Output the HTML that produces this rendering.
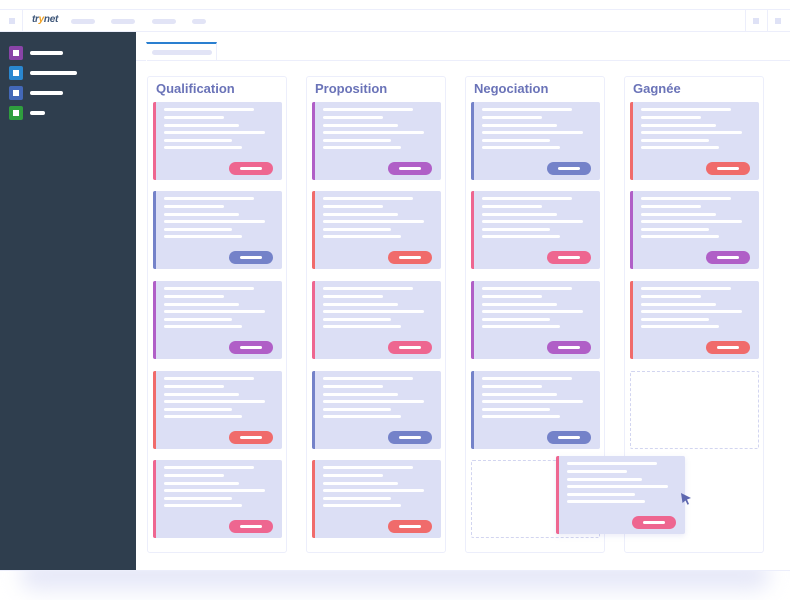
<!DOCTYPE html>
<html><head><meta charset="utf-8"><style>
*{margin:0;padding:0;box-sizing:border-box}
body{width:790px;height:600px;background:#fff;position:relative;overflow:hidden;font-family:"Liberation Sans",sans-serif}
.shadow{position:absolute;left:20px;top:560px;width:750px;height:30px;background:#e6e8f8;filter:blur(10px);border-radius:20px}
.win{position:absolute;left:0;top:10px;width:790px;height:560px;background:#fff;outline:1px solid #eceefb}
.top{position:absolute;left:0;top:0;width:790px;height:22px;border-bottom:1px solid #eceefb}
.side{position:absolute;left:0;top:22px;width:136px;height:538px;background:#2f3e4e}
.a{position:absolute}
.pill{position:absolute;background:#e2e4f6;border-radius:3px;height:5px}
.col{position:absolute;top:66px;width:140px;height:477px;border:1px solid #eceefb;border-radius:3px;background:#fff}
.col h3{position:absolute;left:8px;top:4px;font-size:13px;color:#6a73b8;font-weight:700}
.card{position:absolute;width:129px;height:78px;background:#dcdff5;border-radius:2px;border-left:3px solid}
.ln{position:absolute;left:8px;height:3px;background:#fff;border-radius:2px}
.btn{position:absolute;left:73px;top:60px;width:44px;height:13px;border-radius:7px}
.btn:after{content:"";position:absolute;left:11px;top:5px;width:22px;height:3px;background:#fff;border-radius:2px}
.dash{position:absolute;width:129px;height:78px;border:1px dashed #d2d5f0;border-radius:2px}
</style></head><body>
<div class="shadow"></div>
<div class="win">
 <div class="top">
  <div class="a" style="left:22px;top:0;width:1px;height:22px;background:#eceefb"></div>
  <div class="a" style="left:9px;top:8px;width:6px;height:6px;background:#dfe2f6"></div>
  <div class="a" style="left:32px;top:4px;font-size:10px;font-style:italic;font-weight:bold;color:#3e5678;letter-spacing:-0.3px">tr<span style="color:#f0a020">y</span>net</div>
  <div class="pill" style="left:71px;top:9px;width:24px"></div>
  <div class="pill" style="left:111px;top:9px;width:24px"></div>
  <div class="pill" style="left:152px;top:9px;width:24px"></div>
  <div class="pill" style="left:192px;top:9px;width:14px"></div>
  <div class="a" style="left:745px;top:0;width:1px;height:22px;background:#eceefb"></div>
  <div class="a" style="left:767px;top:0;width:1px;height:22px;background:#eceefb"></div>
  <div class="a" style="left:753px;top:8px;width:6px;height:6px;background:#dfe2f6"></div>
  <div class="a" style="left:775px;top:8px;width:6px;height:6px;background:#dfe2f6"></div>
 </div>
 <div class="side">
  <div class="a" style="left:9px;top:14px;width:14px;height:14px;background:#8a44a8;border-radius:2px"><div class="a" style="left:4px;top:4px;width:6px;height:6px;background:#fff"></div></div>
  <div class="a" style="left:30px;top:19px;width:33px;height:4px;background:#fff;border-radius:2px"></div>
  <div class="a" style="left:9px;top:34px;width:14px;height:14px;background:#2a87d0;border-radius:2px"><div class="a" style="left:4px;top:4px;width:6px;height:6px;background:#fff"></div></div>
  <div class="a" style="left:30px;top:39px;width:47px;height:4px;background:#fff;border-radius:2px"></div>
  <div class="a" style="left:9px;top:54px;width:14px;height:14px;background:#4368b8;border-radius:2px"><div class="a" style="left:4px;top:4px;width:6px;height:6px;background:#fff"></div></div>
  <div class="a" style="left:30px;top:59px;width:33px;height:4px;background:#fff;border-radius:2px"></div>
  <div class="a" style="left:9px;top:74px;width:14px;height:14px;background:#2f9e3e;border-radius:2px"><div class="a" style="left:4px;top:4px;width:6px;height:6px;background:#fff"></div></div>
  <div class="a" style="left:30px;top:79px;width:15px;height:4px;background:#fff;border-radius:2px"></div>
 </div>
 <div class="a" style="left:136px;top:50px;width:654px;height:1px;background:#eceefb"></div>
 <div class="a" style="left:146px;top:32px;width:71px;height:19px;border-right:1px solid #eceefb;border-left:1px solid #fff;border-top:2px solid #2a7fd0"></div>
 <div class="pill" style="left:152px;top:40px;width:60px"></div>
 <div id="board"></div>
</div>
<script>
var C={p:"#ee6690",b:"#7482c9",u:"#b05fc7",o:"#f06b6b"};
var cols=[["Qualification",147,["p","b","u","o","p"]],["Proposition",306,["u","o","p","b","o"]],["Negociation",465,["b","p","u","b"]],["Gagnée",624,["o","u","o"]]];
var ys=[92,181,271,361,450];
var W=[90,60,75,101,68,78],Y=[6,14,22,29,37,44];
function card(x,y,c,extra){var h='<div class="card" style="left:'+x+'px;top:'+y+'px;border-color:'+C[c]+';'+(extra||'')+'">';
for(var i=0;i<6;i++)h+='<div class="ln" style="top:'+Y[i]+'px;width:'+W[i]+'px"></div>';
return h+'<div class="btn" style="background:'+C[c]+'"></div></div>';}
var h='';
cols.forEach(function(c){h+='<div class="col" style="left:'+c[1]+'px"><h3>'+c[0]+'</h3></div>';
c[2].forEach(function(k,i){h+=card(c[1]+6,ys[i],k);});});
h+='<div class="dash" style="left:471px;top:450px"></div>';
h+='<div class="dash" style="left:630px;top:361px"></div>';
h+=card(556,446,"p","box-shadow:0 2px 6px rgba(120,130,200,.15)");
h+='<svg class="a" style="left:680px;top:482px" width="12" height="14" viewBox="0 0 12 14"><path d="M1 1 L11 6 L7 7.5 L9 12 L7.5 12.8 L5.5 8.5 L2.5 11 Z" fill="#5e68b0"/></svg>';
document.getElementById("board").innerHTML=h;
</script>
</body></html>
